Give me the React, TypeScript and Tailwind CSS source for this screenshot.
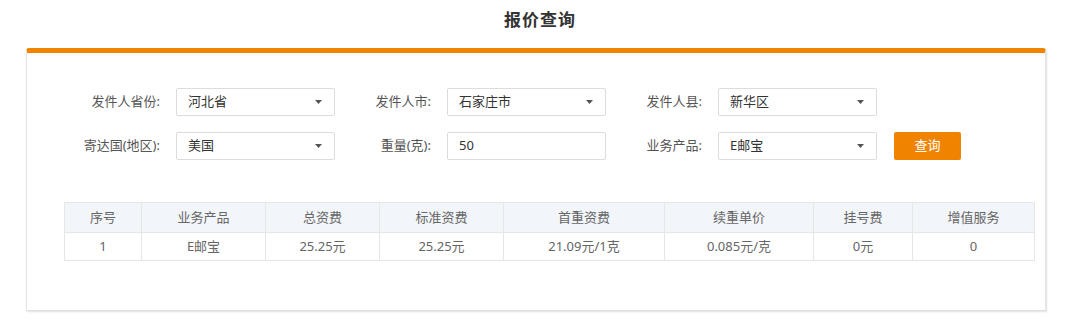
const fontStack = {
  fontFamily: '"Noto Sans", "Noto Sans CJK SC", sans-serif',
};

type Field = { label: string; value: string; select: boolean };

const formRows: Field[][] = [
  [
    { label: "发件人省份:", value: "河北省", select: true },
    { label: "发件人市:", value: "石家庄市", select: true },
    { label: "发件人县:", value: "新华区", select: true },
  ],
  [
    { label: "寄达国(地区):", value: "美国", select: true },
    { label: "重量(克):", value: "50", select: false },
    { label: "业务产品:", value: "E邮宝", select: true },
  ],
];

const columns = [
  { title: "序号", width: "w-[76px]", value: "1" },
  { title: "业务产品", width: "w-[124px]", value: "E邮宝" },
  { title: "总资费", width: "w-[114px]", value: "25.25元" },
  { title: "标准资费", width: "w-[124px]", value: "25.25元" },
  { title: "首重资费", width: "w-[161px]", value: "21.09元/1克" },
  { title: "续重单价", width: "w-[149px]", value: "0.085元/克" },
  { title: "挂号费", width: "w-[99px]", value: "0元" },
  { title: "增值服务", width: "flex-1", value: "0" },
];

function Caret() {
  return (
    <svg width="7" height="4" viewBox="0 0 7 4" className="mr-[12px]">
      <path d="M0 0 H7 L3.5 4 Z" fill="#555" />
    </svg>
  );
}

function FormField({ field }: { field: Field }) {
  return (
    <div className="flex items-center">
      <span className="w-[99px] pr-[3px] text-right text-[13px] text-[#555]">{field.label}</span>
      <div className="ml-[13px] flex h-[28px] w-[159px] items-center justify-between rounded-[2px] border border-[#dcdcdc] bg-white pl-[11px] text-[13px] text-[#333]">
        <span>{field.value}</span>
        {field.select && <Caret />}
      </div>
    </div>
  );
}

export default function App() {
  return (
    <div className="h-[331px] w-[1080px] bg-white" style={fontStack}>
      <h1
        className="flex h-[48px] items-start justify-center pt-[6px] text-[17px] font-bold tracking-[1px] text-[#333]"
        style={{ fontFamily: '"Noto Sans CJK SC", sans-serif' }}
      >
        报价查询
      </h1>

      <div className="ml-[26px] h-[263px] w-[1020px] rounded-t-[3px] border-x border-b border-t-[5px] border-x-[#e3e3e3] border-b-[#dedede] border-t-[#f08300] bg-white shadow-[1px_1px_2px_rgba(0,0,0,0.12)]">
        <div className="flex flex-col gap-[16px] pl-[37px] pt-[35px]">
          {formRows.map((row, i) => (
            <div key={i} className="flex items-center">
              {row.map((field) => (
                <FormField key={field.label} field={field} />
              ))}
              {i === 1 && (
                <button
                  type="button"
                  className="ml-[17px] flex h-[28px] w-[67px] items-center justify-center rounded-[2px] bg-[#f08300] text-[13px] text-white"
                >
                  查询
                </button>
              )}
            </div>
          ))}
        </div>

        <div className="ml-[37px] mt-[42px] w-[971px] border border-[#e6e6e6] text-[13px] text-[#666]">
          <div className="flex h-[29px] bg-[#f2f5f9]">
            {columns.map((col, i) => (
              <div
                key={col.title}
                className={`${col.width} flex items-center justify-center ${i > 0 ? "border-l border-[#e6e6e6]" : ""}`}
              >
                {col.title}
              </div>
            ))}
          </div>
          <div className="flex h-[28px] border-t border-[#e6e6e6] bg-white">
            {columns.map((col, i) => (
              <div
                key={col.title}
                className={`${col.width} flex items-center justify-center ${i > 0 ? "border-l border-[#e6e6e6]" : ""}`}
              >
                {col.value}
              </div>
            ))}
          </div>
        </div>
      </div>
    </div>
  );
}
